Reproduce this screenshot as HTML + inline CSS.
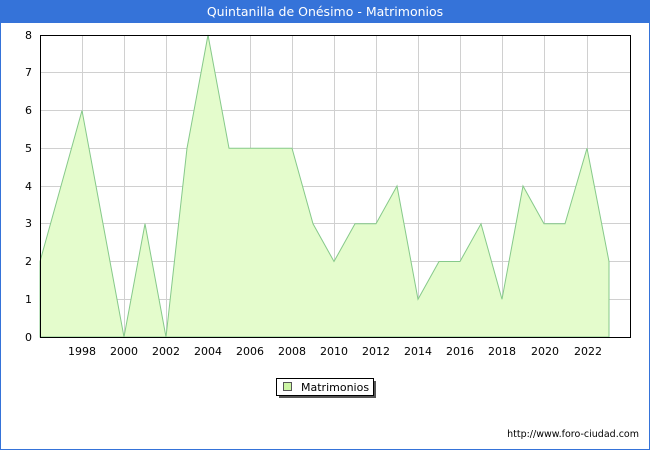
<!DOCTYPE html>
<html><head><style>
body{margin:0;width:650px;height:450px;overflow:hidden;background:#fff;font-family:"DejaVu Sans","Liberation Sans",sans-serif}
</style></head><body>
<svg width="650" height="450" xmlns="http://www.w3.org/2000/svg" font-family="DejaVu Sans, Liberation Sans, sans-serif">
<rect x="0" y="0" width="650" height="450" fill="#3573d9"/>
<rect x="1" y="23" width="648" height="426" fill="#fff"/>
<text x="325" y="16" fill="#fff" font-size="12.5" text-anchor="middle">Quintanilla de Onésimo - Matrimonios</text>
<g stroke="#d0d0d0" stroke-width="1">
<line x1="40" y1="299.5" x2="630" y2="299.5"/><line x1="40" y1="261.5" x2="630" y2="261.5"/>
<line x1="40" y1="223.5" x2="630" y2="223.5"/><line x1="40" y1="186.5" x2="630" y2="186.5"/>
<line x1="40" y1="148.5" x2="630" y2="148.5"/><line x1="40" y1="110.5" x2="630" y2="110.5"/>
<line x1="40" y1="72.5" x2="630" y2="72.5"/>
<line x1="82.5" y1="35" x2="82.5" y2="337"/><line x1="124.5" y1="35" x2="124.5" y2="337"/>
<line x1="166.5" y1="35" x2="166.5" y2="337"/><line x1="208.5" y1="35" x2="208.5" y2="337"/>
<line x1="250.5" y1="35" x2="250.5" y2="337"/><line x1="292.5" y1="35" x2="292.5" y2="337"/>
<line x1="334.5" y1="35" x2="334.5" y2="337"/><line x1="376.5" y1="35" x2="376.5" y2="337"/>
<line x1="418.5" y1="35" x2="418.5" y2="337"/><line x1="460.5" y1="35" x2="460.5" y2="337"/>
<line x1="502.5" y1="35" x2="502.5" y2="337"/><line x1="544.5" y1="35" x2="544.5" y2="337"/>
<line x1="587.5" y1="35" x2="587.5" y2="337"/>
</g>
<polygon fill="#e4fccc" stroke="#86c98a" stroke-width="1" points="40,337 40,261.5 61,186 82,110.5 103,223.75 124,337 145,223.75 166,337 187,148.25 208,35 229,148.25 250,148.25 271,148.25 292,148.25 313,223.75 334,261.5 355,223.75 376,223.75 397,186 418,299.25 439,261.5 460,261.5 481,223.75 502,299.25 523,186 544,223.75 565,223.75 587,148.25 609,261.5 609,337"/>
<rect x="40.5" y="35.5" width="590" height="302" fill="none" stroke="#000"/>
<g font-size="11" fill="#000" text-anchor="end">
<text x="32" y="341">0</text><text x="32" y="303">1</text><text x="32" y="265">2</text><text x="32" y="227">3</text>
<text x="32" y="190">4</text><text x="32" y="152">5</text><text x="32" y="114">6</text><text x="32" y="76">7</text><text x="32" y="39">8</text>
</g>
<g font-size="11" fill="#000" text-anchor="middle">
<text x="82" y="355">1998</text><text x="124" y="355">2000</text><text x="166" y="355">2002</text><text x="208" y="355">2004</text>
<text x="250" y="355">2006</text><text x="292" y="355">2008</text><text x="334" y="355">2010</text><text x="376" y="355">2012</text>
<text x="418" y="355">2014</text><text x="460" y="355">2016</text><text x="502" y="355">2018</text><text x="545" y="355">2020</text>
<text x="588" y="355">2022</text>
</g>
<rect x="279" y="381" width="97" height="17" fill="#555"/>
<rect x="276.5" y="378.5" width="97" height="17" fill="#fff" stroke="#000"/>
<rect x="283.5" y="382.5" width="8" height="8" fill="#ccf5a4" stroke="#555"/>
<text x="301" y="391" font-size="11">Matrimonios</text>
<text x="639" y="437" font-size="9.5" text-anchor="end">http://www.foro-ciudad.com</text>
</svg>
</body></html>
